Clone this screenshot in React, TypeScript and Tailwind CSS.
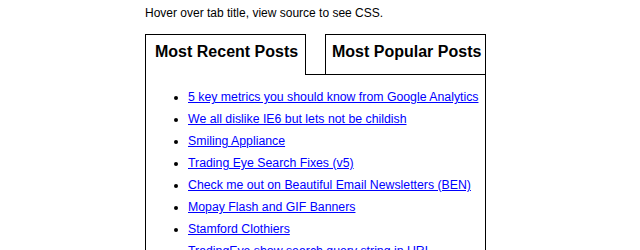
import React from 'react'

const posts = [
  '5 key metrics you should know from Google Analytics',
  'We all dislike IE6 but lets not be childish',
  'Smiling Appliance',
  'Trading Eye Search Fixes (v5)',
  'Check me out on Beautiful Email Newsletters (BEN)',
  'Mopay Flash and GIF Banners',
  'Stamford Clothiers',
  'TradingEye show search query string in URL',
  'Clean up your inbox',
]

export default function App() {
  return (
    <div className="min-h-screen bg-white text-black font-['Liberation_Sans',Arial,sans-serif]">
      <div className="ml-[145px] w-[341px] pt-[6px]">
        <p className="text-[12px] leading-[14px]">Hover over tab title, view source to see CSS.</p>

        {/* tabs */}
        <div className="mt-[14px] flex gap-[19px]">
          <h3 className="relative z-10 h-[41px] w-[161px] border border-b-0 border-black bg-white pl-[9px] pt-[8px] text-[16px] font-bold leading-[18px]">
            Most Recent Posts
          </h3>
          <h3 className="h-[41px] w-[161px] border border-black bg-white pl-[6px] pt-[8px] text-[16px] font-bold leading-[18px]">
            Most Popular Posts
          </h3>
        </div>

        {/* tab body */}
        <div className="-mt-px border border-black pb-4 pt-[11px]">
          <ul className="list-disc pl-[42px] text-[12.3px] leading-[22px]">
            {posts.map((p) => (
              <li key={p}>
                <a href="#" className="text-[#0000ff] underline">
                  {p}
                </a>
              </li>
            ))}
          </ul>
        </div>
      </div>
    </div>
  )
}
